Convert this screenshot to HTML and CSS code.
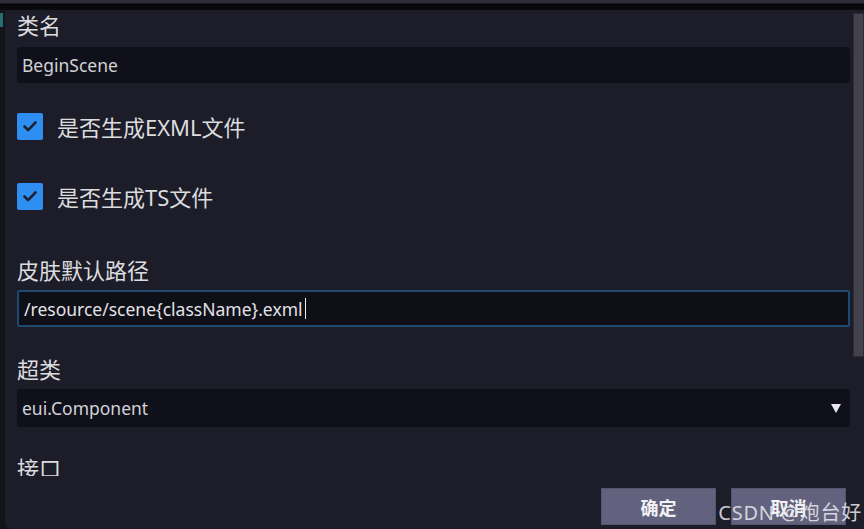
FILE: index.html
```html
<!DOCTYPE html>
<html>
  <head>
    <title>新建类</title>
    <link rel="stylesheet" href="styles.css">
  </head>
  <body>
    <div class="topbar"></div>
    <div class="window">
      <div class="edge"><span class="edge-mark"></span></div>
      <div class="panel">
        <div class="scroll-area">
          <div class="form">
            <label class="field-label first">类名</label>
            <div class="input">BeginScene</div>

            <div class="check-row row-one">
              <span class="checkbox">
                <svg viewBox="0 0 26 26" width="26" height="26">
                  <path d="M7.5 13.5l3.6 3.6 7.4-7.6" fill="none" stroke="#1b2230" stroke-width="2.6" stroke-linecap="round" stroke-linejoin="round"/>
                </svg>
              </span>
              <span class="check-text">是否生成EXML文件</span>
            </div>
            <div class="check-row row-two">
              <span class="checkbox">
                <svg viewBox="0 0 26 26" width="26" height="26">
                  <path d="M7.5 13.5l3.6 3.6 7.4-7.6" fill="none" stroke="#1b2230" stroke-width="2.6" stroke-linecap="round" stroke-linejoin="round"/>
                </svg>
              </span>
              <span class="check-text">是否生成TS文件</span>
            </div>

            <label class="field-label skin">皮肤默认路径</label>
            <div class="input focused">/resource/scene{className}.exml<span class="caret"></span></div>

            <label class="field-label super">超类</label>
            <div class="input select">
              <span>eui.Component</span>
              <span class="arrow"></span>
            </div>

            <label class="field-label iface">接口</label>
          </div>
          <div class="scrollbar"><div class="thumb"></div></div>
        </div>
        <div class="footer">
          <button class="btn">确定</button>
          <button class="btn">取消</button>
          <span class="watermark">CSDN @炮台好</span>
        </div>
      </div>
    </div>
  </body>
</html>
```

FILE: styles.css
```css
/* Reset */
html,
body {
  margin: 0;
  padding: 0;
}
body {
  width: 864px;
  height: 529px;
  overflow: hidden;
  background-color: #14141b;
  font-family: "Noto Sans", "Noto Sans CJK SC", sans-serif;
  color: #d6d6da;
}

/* Top strip */
.topbar {
  height: 10px;
  background: linear-gradient(#2e2d3a 0, #2e2d3a 3px, #050507 4px, #0b0b10 10px);
}

.window {
  display: flex;
  height: 519px;
}

.edge {
  width: 5px;
  background-color: #13131a;
}
.edge-mark {
  display: block;
  width: 3px;
  height: 14px;
  margin-top: 3px;
  background-color: #1f6f73;
}

.panel {
  flex: 1;
  display: flex;
  flex-direction: column;
  background-color: #1d1c29;
  border-bottom-left-radius: 8px;
}

/* Scrolling content */
.scroll-area {
  display: flex;
  height: 466px;
  overflow: hidden;
}
.form {
  flex: 1;
  display: flex;
  flex-direction: column;
  padding: 0 3px 0 12px;
}

.field-label {
  display: block;
  font-size: 22px;
  line-height: 30px;
  color: #dcdcdf;
}
.field-label.first {
  margin-bottom: 7px;
}
.field-label.skin {
  margin-top: 44px;
  margin-bottom: 5px;
}
.field-label.super {
  margin-top: 27px;
  margin-bottom: 5px;
}
.field-label.iface {
  margin-top: 26px;
  flex-shrink: 0;
}

.input {
  display: flex;
  align-items: center;
  flex-shrink: 0;
  height: 36px;
  padding: 0 5px;
  background-color: #10101a;
  border-radius: 4px;
  font-size: 17.5px;
  color: #d2d2d6;
}
.input.focused {
  height: 33px;
  padding: 0 5px;
  border: 2px solid #1d4a70;
  border-radius: 2px;
  background-color: #0f0f17;
  color: #e2e2e6;
}
.caret {
  display: inline-block;
  width: 1px;
  height: 21px;
  margin-left: 2px;
  background-color: #f0f0f0;
}
.input.select {
  height: 38px;
  justify-content: space-between;
}
.arrow {
  width: 0;
  height: 0;
  margin-right: 4px;
  border-left: 5px solid transparent;
  border-right: 5px solid transparent;
  border-top: 9px solid #e8e8ec;
}

.check-row {
  display: flex;
  align-items: center;
  flex-shrink: 0;
  height: 30px;
}
.row-one {
  margin-top: 28px;
}
.row-two {
  margin-top: 40px;
}
.checkbox {
  display: flex;
  width: 26px;
  height: 27px;
  border-radius: 2px;
  background-color: #2e8ef2;
  align-items: center;
  justify-content: center;
}
.check-text {
  margin-left: 14px;
  font-size: 22px;
  color: #dcdcdf;
}

/* Scrollbar */
.scrollbar {
  width: 11px;
}
.thumb {
  height: 342px;
  margin-top: 3px;
  background-color: #42414c;
  border: 1px solid #2c2b36;
}

/* Footer buttons */
.footer {
  position: relative;
  flex: 1;
  display: flex;
  justify-content: flex-end;
  align-items: flex-start;
  gap: 15px;
  padding: 12px 18px 0 0;
}
.btn {
  width: 115px;
  height: 37px;
  border: 1px solid #55556e;
  background-color: #62627f;
  color: #f2f2f4;
  font-family: "Noto Sans CJK SC", sans-serif;
  font-size: 18px;
  font-weight: bold;
  padding: 0;
}
.watermark {
  position: absolute;
  right: 2px;
  bottom: 3px;
  font-family: "Noto Sans", "Noto Sans CJK SC", sans-serif;
  font-size: 20px;
  line-height: 26px;
  letter-spacing: 0.8px;
  color: rgba(235, 235, 240, 0.85);
}
```
